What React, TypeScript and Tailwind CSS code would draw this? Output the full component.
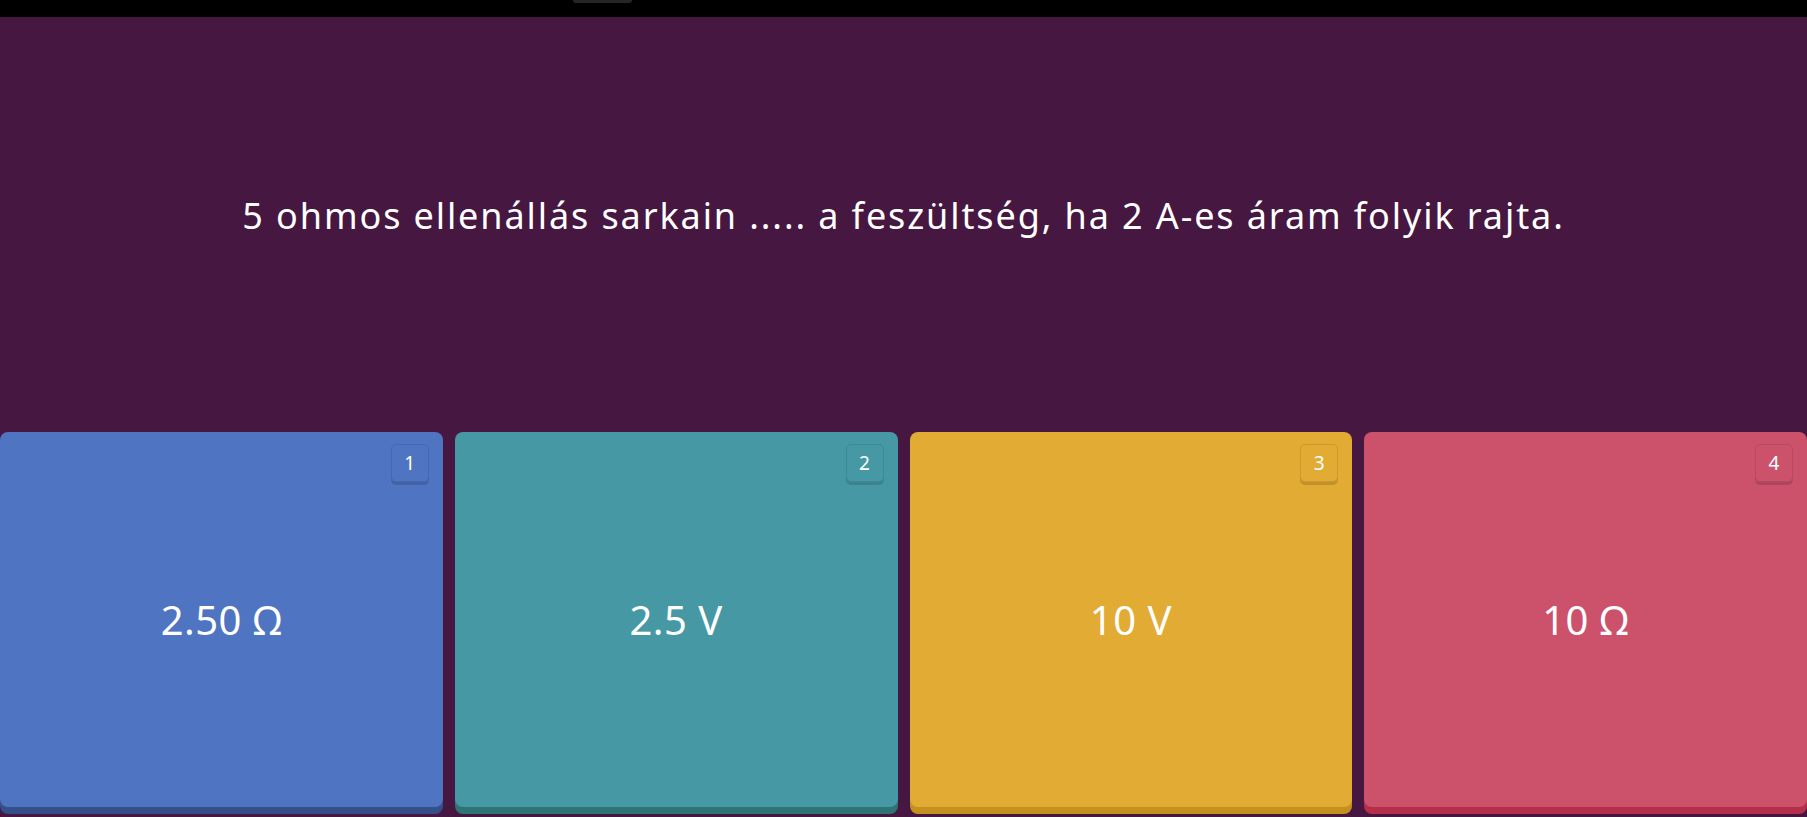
import React from "react";

const options = [
  { n: "1", text: "2.50 Ω", face: "bg-[#4f74c2]", shadow: "shadow-[0_7px_0_#33508a]" },
  { n: "2", text: "2.5 V", face: "bg-[#4699a4]", shadow: "shadow-[0_7px_0_#2e7474]" },
  { n: "3", text: "10 V", face: "bg-[#e2ab34]", shadow: "shadow-[0_7px_0_#c4911f]" },
  { n: "4", text: "10 Ω", face: "bg-[#cc526b]", shadow: "shadow-[0_7px_0_#b52f4a]" },
];

export default function App() {
  return (
    <div
      className="flex h-[817px] w-full flex-col bg-[#451741] text-white"
      style={{ fontFamily: '"Noto Sans", "Open Sans", sans-serif' }}
    >
      <div className="relative h-[17px] w-full bg-black">
        <div className="absolute left-[573px] top-0 h-[3px] w-[59px] rounded-b-md bg-[#262626]" />
      </div>
      <div className="flex h-[415px] items-center justify-center pb-[18px]">
        <p className="text-[36px] font-normal leading-none tracking-[1.9px]">
          5 ohmos ellenállás sarkain ..... a feszültség, ha 2 A-es áram folyik rajta.
        </p>
      </div>
      <div className="grid h-[385px] grid-cols-4 gap-[12px] pb-[10px]">
        {options.map((o) => (
          <div
            key={o.n}
            className={`relative flex items-center justify-center rounded-lg ${o.face} ${o.shadow}`}
          >
            <div className="absolute right-[14px] top-[12px] flex h-[38px] w-[38px] items-center justify-center rounded-[5px] border border-black/10 text-[19px] font-normal shadow-[0_3px_0_rgba(0,0,0,0.15)]">
              {o.n}
            </div>
            <span className="text-[40px] font-normal leading-none tracking-[0.5px]">{o.text}</span>
          </div>
        ))}
      </div>
    </div>
  );
}
